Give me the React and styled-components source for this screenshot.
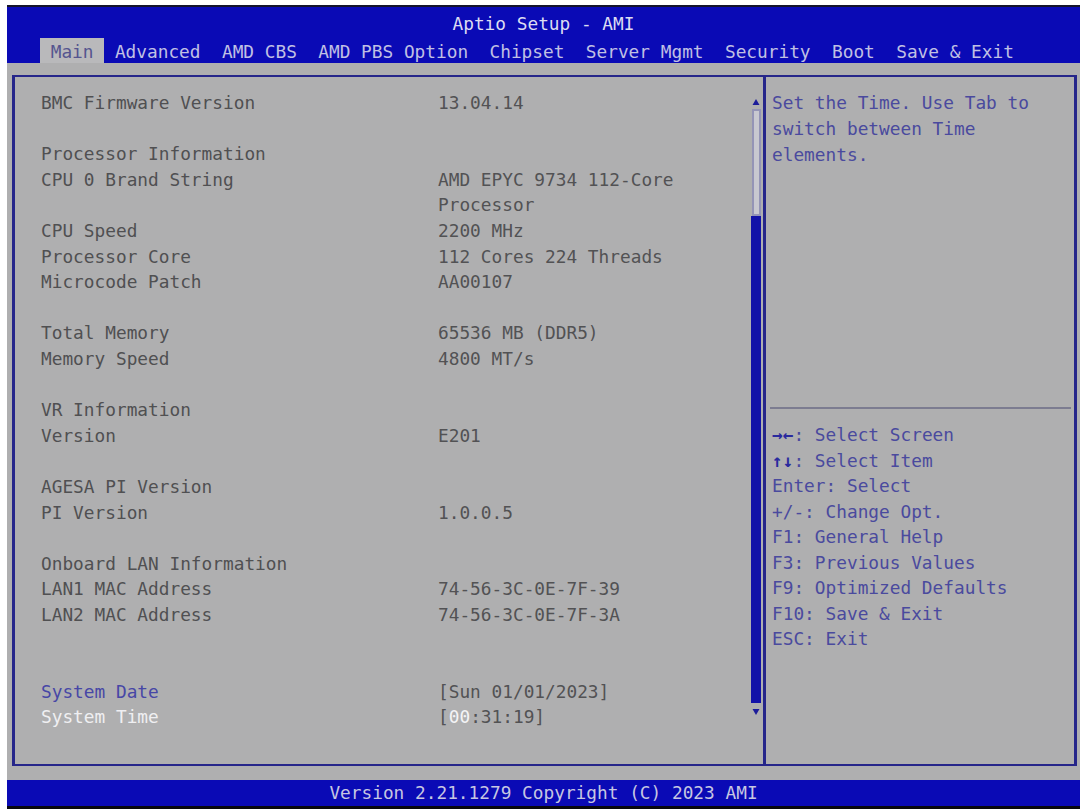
import React from "react";
import styled, { createGlobalStyle } from "styled-components";

const GlobalStyle = createGlobalStyle`
  html, body {
    margin: 0;
    padding: 0;
    background: #ffffff;
  }
  body {
    font-family: "DejaVu Sans Mono", "Liberation Mono", monospace;
    font-size: 17.8px;
  }
`;

const Screen = styled.div`
  margin: 5px 4px 0 7px;
  display: flex;
  flex-direction: column;
  background: #afafb0;
  border-top: 2px solid #15152c;
  border-bottom: 3px solid #08080e;
`;

const Header = styled.div`
  background: #0a0ab5;
  height: 56px;
  display: flex;
  flex-direction: column;
`;

const Title = styled.div`
  height: 31px;
  line-height: 33px;
  text-align: center;
  color: #dcdcf2;
`;

const TabRow = styled.div`
  display: flex;
  height: 25px;
  padding-left: 33px;
`;

const Tab = styled.div`
  padding: 0 10.7px;
  line-height: 27px;
  color: ${(p) => (p.$active ? "#55558f" : "#c0c0e4")};
  background: ${(p) => (p.$active ? "#b9b9bb" : "transparent")};
  white-space: pre;
`;

const Body = styled.div`
  height: 717px;
  box-sizing: border-box;
  padding: 12px 3px 14px 5px;
  display: flex;
`;

const Frame = styled.div`
  flex: 1;
  display: flex;
  border: 2px solid #26268a;
  border-left-width: 3px;
  border-right-width: 3px;
`;

const LeftPane = styled.div`
  width: 748px;
  flex: 0 0 auto;
  box-sizing: border-box;
  display: flex;
  padding: 13px 2px 0 26px;
`;

const Content = styled.div`
  flex: 1;
  display: flex;
  flex-direction: column;
`;

const Row = styled.div`
  display: grid;
  grid-template-columns: 397px 1fr;
  min-height: 25.6px;
  line-height: 25.6px;
  color: #505052;
`;

const Label = styled.span`
  white-space: pre;
  color: ${(p) =>
    p.$kind === "field" ? "#4747a6" : p.$kind === "selected" ? "#efeff2" : "#505052"};
`;

const Value = styled.span`
  color: #525254;
`;

const Hot = styled.span`
  color: #f4f4f6;
`;

const Scrollbar = styled.div`
  width: 10px;
  height: 620px;
  margin-top: 8px;
  display: flex;
  flex-direction: column;
  align-items: center;
`;

const Arrow = styled.svg`
  width: 8px;
  height: 8px;
  flex: 0 0 auto;
`;

const Track = styled.div`
  width: 9px;
  height: 107px;
  margin-top: 3px;
  box-sizing: border-box;
  border: 2px solid #9494b6;
  background: #c8c8d0;
`;

const Thumb = styled.div`
  width: 10px;
  height: 487px;
  background: #1212a8;
  margin-bottom: 5px;
`;

const RightPane = styled.div`
  flex: 1;
  display: flex;
  flex-direction: column;
  border-left: 3px solid #26268a;
`;

const HelpTop = styled.div`
  height: 330px;
  box-sizing: border-box;
  padding: 13px 8px 0 6px;
  line-height: 25.8px;
  color: #4a4a9e;
`;

const Divider = styled.div`
  height: 2px;
  margin: 0 3px 0 4px;
  background: #7c7c90;
`;

const KeyHelp = styled.div`
  padding: 13px 8px 0 6px;
  line-height: 25.5px;
  color: #4a4a9e;
`;

const KeyLine = styled.div`
  white-space: pre;
`;

const Keys = styled.span`
  color: #2a2a9e;
  font-weight: bold;
`;

const Footer = styled.div`
  background: #0a0ab5;
  height: 26px;
  line-height: 26px;
  text-align: center;
  color: #c6c6e2;
`;

const tabs = [
  "Main",
  "Advanced",
  "AMD CBS",
  "AMD PBS Option",
  "Chipset",
  "Server Mgmt",
  "Security",
  "Boot",
  "Save & Exit",
];

const rows = [
  ["BMC Firmware Version", "13.04.14"],
  null,
  ["Processor Information", ""],
  ["CPU 0 Brand String", "AMD EPYC 9734 112-Core Processor"],
  ["CPU Speed", "2200 MHz"],
  ["Processor Core", "112 Cores 224 Threads"],
  ["Microcode Patch", "AA00107"],
  null,
  ["Total Memory", "65536 MB (DDR5)"],
  ["Memory Speed", "4800 MT/s"],
  null,
  ["VR Information", ""],
  ["Version", "E201"],
  null,
  ["AGESA PI Version", ""],
  ["PI Version", "1.0.0.5"],
  null,
  ["Onboard LAN Information", ""],
  ["LAN1 MAC Address", "74-56-3C-0E-7F-39"],
  ["LAN2 MAC Address", "74-56-3C-0E-7F-3A"],
  null,
  null,
];

const keyHelp = [
  ["→←", ": Select Screen"],
  ["↑↓", ": Select Item"],
  ["", "Enter: Select"],
  ["", "+/-: Change Opt."],
  ["", "F1: General Help"],
  ["", "F3: Previous Values"],
  ["", "F9: Optimized Defaults"],
  ["", "F10: Save & Exit"],
  ["", "ESC: Exit"],
];

const App = () => {
  return (
    <>
      <GlobalStyle />
      <Screen>
        <Header>
          <Title>Aptio Setup - AMI</Title>
          <TabRow>
            {tabs.map((t, i) => (
              <Tab key={t} $active={i === 0}>
                {t}
              </Tab>
            ))}
          </TabRow>
        </Header>
        <Body>
          <Frame>
            <LeftPane>
              <Content>
                {rows.map((r, i) =>
                  r ? (
                    <Row key={i}>
                      <Label>{r[0]}</Label>
                      <Value>{r[1]}</Value>
                    </Row>
                  ) : (
                    <Row key={i} />
                  )
                )}
                <Row>
                  <Label $kind="field">System Date</Label>
                  <Value>[Sun 01/01/2023]</Value>
                </Row>
                <Row>
                  <Label $kind="selected">System Time</Label>
                  <Value>
                    [<Hot>00</Hot>:31:19]
                  </Value>
                </Row>
              </Content>
              <Scrollbar>
                <Arrow viewBox="0 0 8 8">
                  <polygon points="4,1 7.5,7 0.5,7" fill="#1c1c9a" />
                </Arrow>
                <Track />
                <Thumb />
                <Arrow viewBox="0 0 8 8">
                  <polygon points="0.5,1 7.5,1 4,7" fill="#1c1c9a" />
                </Arrow>
              </Scrollbar>
            </LeftPane>
            <RightPane>
              <HelpTop>
                Set the Time. Use Tab to
                <br />
                switch between Time
                <br />
                elements.
              </HelpTop>
              <Divider />
              <KeyHelp>
                {keyHelp.map(([k, t]) => (
                  <KeyLine key={t}>
                    {k && <Keys>{k}</Keys>}
                    {t}
                  </KeyLine>
                ))}
              </KeyHelp>
            </RightPane>
          </Frame>
        </Body>
        <Footer>Version 2.21.1279 Copyright (C) 2023 AMI</Footer>
      </Screen>
    </>
  );
};

export default App;
